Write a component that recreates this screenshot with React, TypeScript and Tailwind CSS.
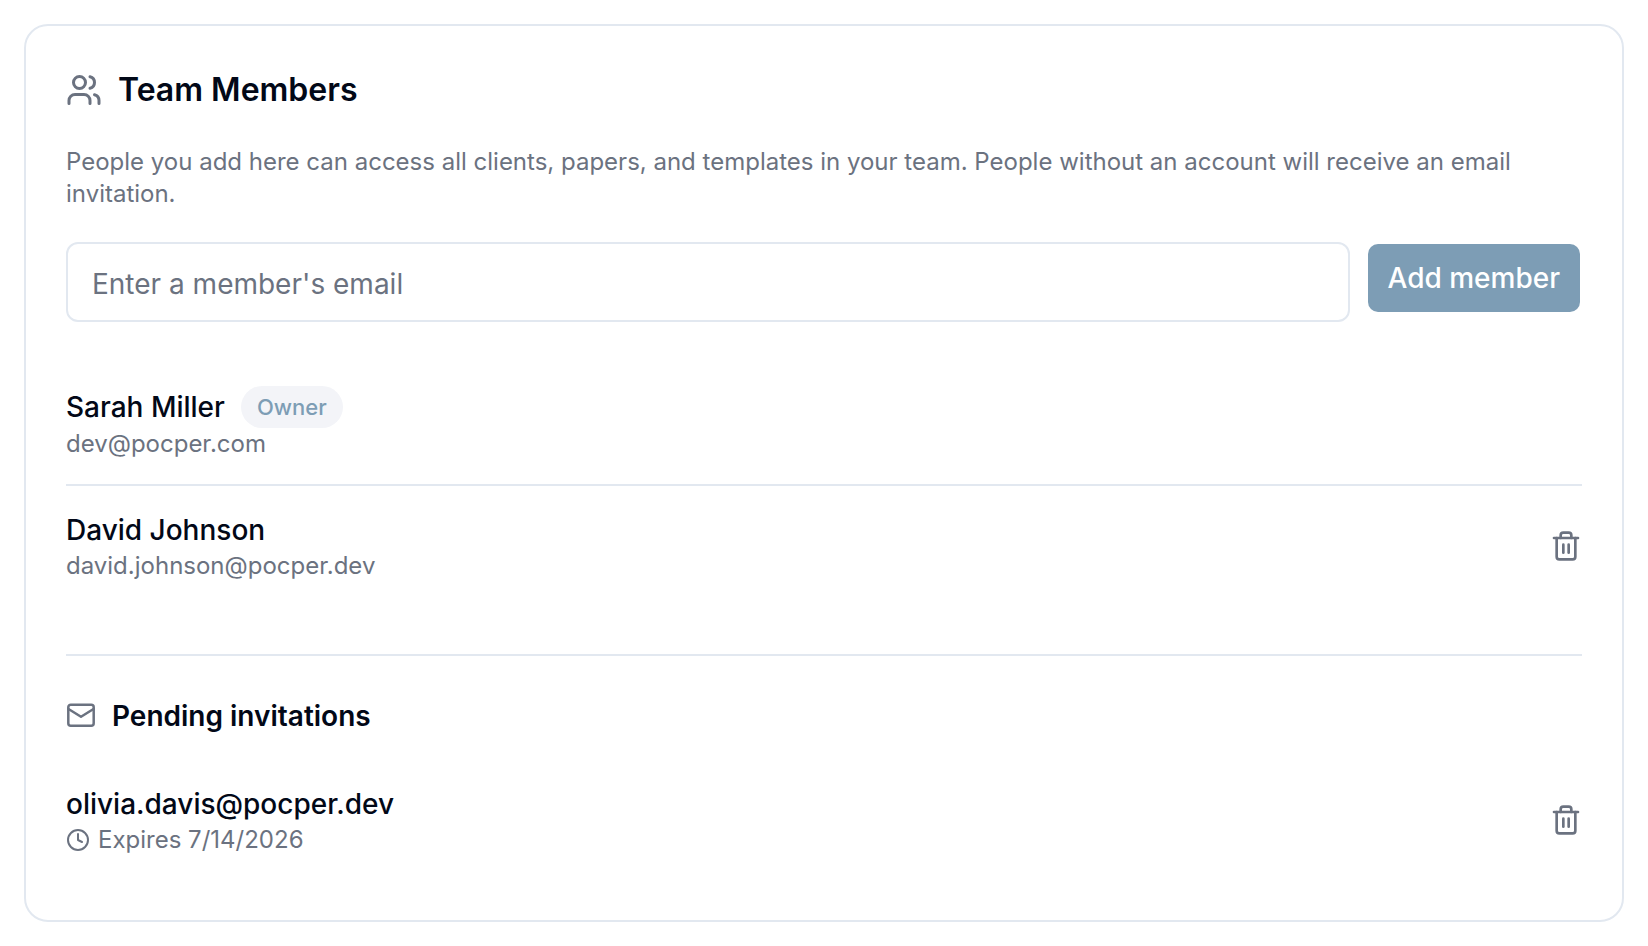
import { Users, Clock, Trash2 } from "lucide-react";

function MailIcon() {
  return (
    <svg
      width="30"
      height="30"
      viewBox="0 0 30 30"
      fill="none"
      stroke="currentColor"
      strokeWidth="2.5"
      strokeLinecap="round"
      strokeLinejoin="round"
      aria-hidden="true"
      className="shrink-0 text-[#6b7280]"
    >
      <rect x="2.3" y="3.7" width="25.4" height="21" rx="2.5" />
      <path d="M2.5 8 L15 15.8 L27.5 8" />
    </svg>
  );
}

function RemoveButton({ label }: { label: string }) {
  return (
    <button type="button" aria-label={label} className="text-[#6b7280]">
      <Trash2 size={32} strokeWidth={2} />
    </button>
  );
}

export default function App() {
  return (
    <main className="p-6 font-['Inter',sans-serif] text-[#020817]">
      <section className="rounded-3xl border-2 border-[#e2e8f0] bg-white px-10 pt-10 pb-16">
        <h1 className="flex h-12 items-center gap-4 text-[32px] font-semibold">
          <Users size={36} className="text-[#6b7280]" />
          Team Members
        </h1>
        <p className="mt-8 text-2xl leading-8 text-[#6b7280]">
          People you add here can access all clients, papers, and templates in your team. People without an account will receive an email invitation.
        </p>
        <form className="mt-8 flex items-start gap-4">
          <input
            type="email"
            aria-label="Member email"
            placeholder="Enter a member's email"
            className="h-20 min-w-0 flex-1 rounded-xl border-2 border-[#e2e8f0] px-6 pt-1 text-[28px] placeholder:text-[#6b7280]"
          />
          <button type="button" className="m-0.5 h-[68px] rounded-[10px] bg-[#7d9db5] px-5 text-[28px] font-medium text-white">
            Add member
          </button>
        </form>
        <ul className="mt-16">
          <li className="border-b-2 border-[#e2e8f0] pb-6">
            <div className="flex items-center gap-4 text-[28px] font-medium">
              Sarah Miller
              <span className="rounded-full bg-[#f3f4f8] px-4 py-1 text-[22px] leading-[34px] text-[#7d9db5]">Owner</span>
            </div>
            <p className="text-2xl text-[#6b7280]">dev@pocper.com</p>
          </li>
          <li className="flex items-center justify-between py-6">
            <div>
              <p className="text-[28px] leading-10 font-medium">David Johnson</p>
              <p className="text-2xl text-[#6b7280]">david.johnson@pocper.dev</p>
            </div>
            <RemoveButton label="Remove David Johnson" />
          </li>
        </ul>
        <div className="mt-12 border-t-2 border-[#e2e8f0] pt-10">
          <h2 className="flex items-center gap-4 text-[28px] leading-10 font-semibold">
            <MailIcon />
            Pending invitations
          </h2>
          <div className="mt-12 flex items-center justify-between">
            <div>
              <p className="text-[28px] leading-10 font-medium">olivia.davis@pocper.dev</p>
              <p className="flex items-center gap-2 text-2xl text-[#6b7280]">
                <Clock size={24} />
                Expires 7/14/2026
              </p>
            </div>
            <RemoveButton label="Cancel invitation for olivia.davis@pocper.dev" />
          </div>
        </div>
      </section>
    </main>
  );
}
